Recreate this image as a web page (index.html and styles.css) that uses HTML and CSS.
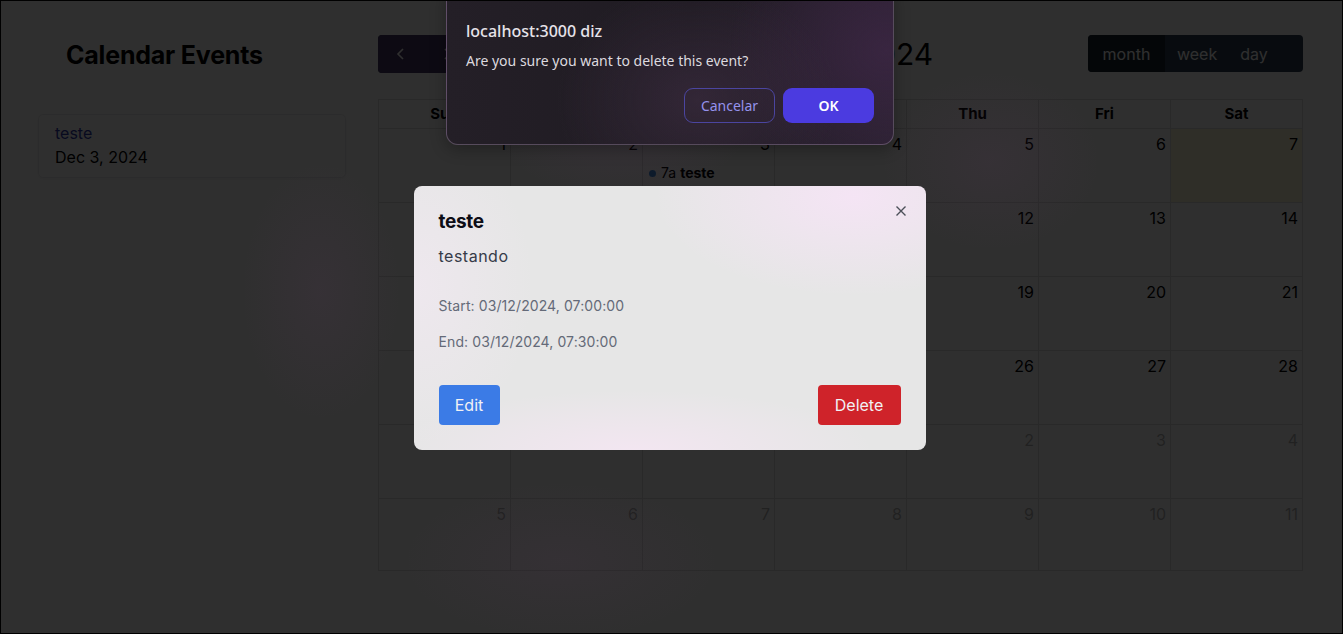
FILE: index.html
```html
<!DOCTYPE html>
<html lang="pt">
<head>
<meta charset="utf-8">
<title>Calendar Events</title>
<link rel="stylesheet" href="styles.css">
</head>
<body>
<div class="frame">
  <div class="app">
    <aside class="sidebar">
      <h1 class="page-title">Calendar Events</h1>
      <div class="event-card">
        <div class="event-name">teste</div>
        <div class="event-date">Dec 3, 2024</div>
      </div>
    </aside>
    <main class="calendar">
      <div class="toolbar">
        <div class="chunk">
          <div class="btn-group">
            <button class="btn icon-btn" aria-label="prev">
              <svg width="16" height="16" viewBox="0 0 16 16"><polyline points="10,3 5,8 10,13" fill="none" stroke="#fff" stroke-width="1.6"/></svg>
            </button>
            <button class="btn icon-btn" aria-label="next">
              <svg width="16" height="16" viewBox="0 0 16 16"><polyline points="6,3 11,8 6,13" fill="none" stroke="#fff" stroke-width="1.6"/></svg>
            </button>
          </div>
          <button class="btn today">today</button>
        </div>
        <h2 class="cal-title">December 2024</h2>
        <div class="btn-group views">
          <button class="btn active">month</button>
          <button class="btn w-week">week</button>
          <button class="btn w-day">day</button>
        </div>
      </div>
      <div class="grid">
        <div class="dow">Sun</div><div class="dow">Mon</div><div class="dow">Tue</div><div class="dow">Wed</div><div class="dow">Thu</div><div class="dow">Fri</div><div class="dow">Sat</div>

        <div class="day"><span class="num">1</span></div>
        <div class="day"><span class="num">2</span></div>
        <div class="day"><span class="num">3</span>
          <div class="event"><span class="dot"></span><span class="ev-time">7a</span><b class="ev-title">teste</b></div>
        </div>
        <div class="day"><span class="num">4</span></div>
        <div class="day"><span class="num">5</span></div>
        <div class="day"><span class="num">6</span></div>
        <div class="day today-cell"><span class="num">7</span></div>

        <div class="day"><span class="num">8</span></div>
        <div class="day"><span class="num">9</span></div>
        <div class="day"><span class="num">10</span></div>
        <div class="day"><span class="num">11</span></div>
        <div class="day"><span class="num">12</span></div>
        <div class="day"><span class="num">13</span></div>
        <div class="day"><span class="num">14</span></div>

        <div class="day"><span class="num">15</span></div>
        <div class="day"><span class="num">16</span></div>
        <div class="day"><span class="num">17</span></div>
        <div class="day"><span class="num">18</span></div>
        <div class="day"><span class="num">19</span></div>
        <div class="day"><span class="num">20</span></div>
        <div class="day"><span class="num">21</span></div>

        <div class="day"><span class="num">22</span></div>
        <div class="day"><span class="num">23</span></div>
        <div class="day"><span class="num">24</span></div>
        <div class="day"><span class="num">25</span></div>
        <div class="day"><span class="num">26</span></div>
        <div class="day"><span class="num">27</span></div>
        <div class="day"><span class="num">28</span></div>

        <div class="day"><span class="num">29</span></div>
        <div class="day"><span class="num">30</span></div>
        <div class="day"><span class="num">31</span></div>
        <div class="day other"><span class="num">1</span></div>
        <div class="day other"><span class="num">2</span></div>
        <div class="day other"><span class="num">3</span></div>
        <div class="day other"><span class="num">4</span></div>

        <div class="day other"><span class="num">5</span></div>
        <div class="day other"><span class="num">6</span></div>
        <div class="day other"><span class="num">7</span></div>
        <div class="day other"><span class="num">8</span></div>
        <div class="day other"><span class="num">9</span></div>
        <div class="day other"><span class="num">10</span></div>
        <div class="day other"><span class="num">11</span></div>
      </div>
    </main>
  </div>

  <div class="overlay">
    <div class="modal">
      <button class="close" aria-label="close">
        <svg width="12" height="12" viewBox="0 0 12 12"><path d="M1.5 1.5 L10.5 10.5 M10.5 1.5 L1.5 10.5" stroke="#4b4f58" stroke-width="1.4" fill="none"/></svg>
      </button>
      <h3 class="modal-title">teste</h3>
      <p class="modal-desc">testando</p>
      <p class="modal-meta start">Start: 03/12/2024, 07:00:00</p>
      <p class="modal-meta end">End: 03/12/2024, 07:30:00</p>
      <div class="modal-actions">
        <button class="mbtn edit">Edit</button>
        <button class="mbtn delete">Delete</button>
      </div>
    </div>
  </div>

  <div class="confirm">
    <div class="confirm-title">localhost:3000 diz</div>
    <div class="confirm-msg">Are you sure you want to delete this event?</div>
    <div class="confirm-actions">
      <button class="cbtn cancel">Cancelar</button>
      <button class="cbtn ok">OK</button>
    </div>
  </div>
</div>
</body>
</html>
```

FILE: styles.css
```css
* { box-sizing: border-box; }

html, body {
  margin: 0;
  padding: 0;
  background: #000;
}

.frame {
  position: relative;
  width: 1343px;
  height: 634px;
  border: 1px solid #000;
  background: #fff;
  overflow: hidden;
  font-family: "Inter", "Noto Sans", sans-serif;
  color: #000;
}

.app {
  display: flex;
  gap: 32px;
  padding: 33px 39px 0 37px;
  height: 100%;
}

/* Sidebar */
.sidebar {
  width: 308px;
  flex: none;
}

.page-title {
  margin: 3px 0 0 28px;
  font-size: 25px;
  line-height: 36px;
  font-weight: 700;
  letter-spacing: -0.2px;
  color: #000;
}

.event-card {
  margin-top: 41px;
  height: 64px;
  padding: 6px 16px 8px;
  border: 1px solid #e9e9ee;
  border-radius: 5px;
  box-shadow: 0 1px 3px rgba(0, 0, 0, 0.06);
}

.event-name {
  font-size: 16px;
  line-height: 24px;
  color: #2f3aa8;
}

.event-date {
  font-size: 16px;
  line-height: 24px;
  color: #000;
}

/* Calendar */
.calendar {
  flex: 1;
  min-width: 0;
}

.toolbar {
  display: flex;
  justify-content: space-between;
  align-items: center;
  height: 39px;
  margin-bottom: 26px;
}

.chunk {
  display: flex;
  align-items: center;
  gap: 12px;
}

.btn-group {
  display: flex;
  height: 38px;
  border-radius: 4px;
  overflow: hidden;
  background: #2c3e50;
}

.btn {
  border: 0;
  margin: 0;
  height: 38px;
  padding: 0 12px;
  background: #2c3e50;
  color: #fff;
  font-family: inherit;
  font-size: 16px;
}

.icon-btn {
  width: 46px;
  display: flex;
  align-items: center;
  justify-content: center;
  padding: 0;
  background: #4a3a6a;
}

.today {
  border-radius: 4px;
  background: #6b7b8c;
}

.cal-title {
  margin: 0;
  font-size: 30px;
  font-weight: 400;
  line-height: 38px;
  color: #000;
}

.views {
  padding-right: 23px;
  height: 37px;
}

.views .btn {
  height: 37px;
}

.views .active {
  background: #1a252f;
  width: 77px;
}

.w-week { width: 63px; }
.w-day { width: 52px; }

.grid {
  display: grid;
  grid-template-columns: repeat(7, 1fr);
  grid-template-rows: 29px repeat(5, 74px) 72px;
  border-top: 1px solid #ddd;
  border-left: 1px solid #ddd;
}

.dow {
  border-right: 1px solid #ddd;
  border-bottom: 1px solid #ddd;
  font-size: 15px;
  font-weight: 700;
  line-height: 28px;
  text-align: center;
}

.day {
  border-right: 1px solid #ddd;
  border-bottom: 1px solid #ddd;
  padding: 3px 4px 0 6px;
  display: flex;
  flex-direction: column;
}

.num {
  align-self: flex-end;
  font-size: 16px;
  line-height: 24px;
}

.other .num {
  opacity: 0.3;
}

.today-cell {
  background: rgba(255, 220, 40, 0.18);
}

.event {
  display: flex;
  align-items: center;
  margin-top: 7px;
  font-size: 14px;
  line-height: 20px;
}

.dot {
  width: 7px;
  height: 7px;
  border-radius: 50%;
  background: #3788d8;
  margin-right: 5px;
}

.ev-time { margin-right: 4px; }
.ev-title { font-weight: 700; }

/* Overlay + modal */
.overlay {
  position: absolute;
  inset: 0;
  display: flex;
  align-items: center;
  justify-content: center;
  background:
    radial-gradient(ellipse 80px 130px at 320px 290px, rgba(140, 70, 140, 0.07), transparent),
    radial-gradient(ellipse 140px 100px at 620px 100px, rgba(140, 70, 150, 0.10), transparent),
    radial-gradient(ellipse 110px 90px at 990px 160px, rgba(140, 70, 140, 0.07), transparent),
    radial-gradient(ellipse 160px 80px at 560px 560px, rgba(140, 70, 140, 0.06), transparent),
    rgba(0, 0, 0, 0.815);
}

.modal {
  position: relative;
  width: 512px;
  height: 264px;
  margin: 2px 4px 0 0;
  padding: 22px 25px 25px;
  border-radius: 8px;
  background:
    radial-gradient(ellipse 200px 100px at 440px 10px, rgba(246, 228, 246, 0.9), transparent),
    radial-gradient(ellipse 240px 60px at 220px 264px, rgba(244, 230, 242, 0.9), transparent),
    radial-gradient(ellipse 120px 160px at 0px 100px, rgba(240, 232, 240, 0.8), transparent),
    #e6e6e6;
  display: flex;
  flex-direction: column;
}

.close {
  position: absolute;
  top: 19px;
  right: 19px;
  border: 0;
  padding: 0;
  background: none;
  width: 12px;
  height: 12px;
  display: flex;
}

.modal-title {
  margin: 0;
  font-size: 19px;
  line-height: 28px;
  font-weight: 700;
  letter-spacing: -0.3px;
  color: #0d0d16;
}

.modal-desc {
  margin: 8px 0 0;
  font-size: 16px;
  line-height: 24px;
  letter-spacing: 0.5px;
  color: #363b48;
}

.modal-meta {
  margin: 0;
  font-size: 14px;
  line-height: 20px;
  letter-spacing: 0.1px;
  color: #646a78;
}

.start { margin-top: 28px; }
.end { margin-top: 16px; }

.modal-actions {
  display: flex;
  justify-content: space-between;
  margin-top: 33px;
}

.mbtn {
  height: 40px;
  padding: 0;
  border: 0;
  border-radius: 4px;
  font-family: inherit;
  font-size: 16px;
  color: #f1f1f4;
}

.edit { background: #3b7be6; width: 61px; }
.delete { background: #cf232a; width: 83px; }

/* Native confirm dialog */
.confirm {
  position: absolute;
  top: -12px;
  left: 445px;
  width: 448px;
  height: 156px;
  padding: 30px 19px 20px;
  border: 1px solid rgba(150, 130, 160, 0.45);
  border-radius: 12px;
  background:
    radial-gradient(ellipse 140px 120px at 250px 110px, rgba(70, 50, 75, 0.5), transparent),
    radial-gradient(ellipse 160px 140px at 440px 60px, rgba(60, 38, 68, 0.8), transparent),
    linear-gradient(90deg, #241f27, #1f1b22 55%, #2a2130);
  font-family: "Noto Sans", "Open Sans", sans-serif;
  color: #e6e3e9;
  box-shadow: 0 4px 16px rgba(0, 0, 0, 0.3);
}

.confirm-title {
  font-size: 16px;
  line-height: 22px;
  font-weight: 500;
}

.confirm-msg {
  margin-top: 9px;
  font-size: 14px;
  line-height: 20px;
  color: #dcd9df;
}

.confirm-actions {
  display: flex;
  justify-content: flex-end;
  gap: 8px;
  margin-top: 17px;
}

.cbtn {
  width: 91px;
  height: 35px;
  border-radius: 9px;
  font-family: inherit;
  font-size: 14px;
}

.cancel {
  background: transparent;
  border: 1px solid #4b45a0;
  color: #9592ec;
}

.ok {
  background: #4b3be0;
  border: 0;
  color: #fff;
  font-weight: 600;
}
```
